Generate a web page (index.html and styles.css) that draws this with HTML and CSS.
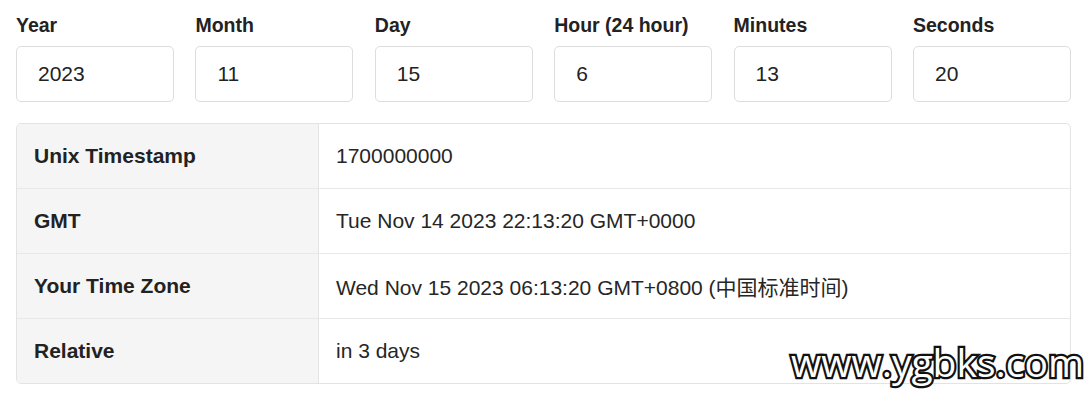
FILE: index.html
```html
<!DOCTYPE html>
<html lang="en">
<head>
  <meta charset="UTF-8" />
  <meta name="viewport" content="width=device-width, initial-scale=1.0" />
  <title>Unix Timestamp Converter</title>
  <link rel="stylesheet" href="styles.css">
</head>
<body>
  <div class="container">
    <div class="fields">
      <div class="field">
        <label for="year">Year</label>
        <input type="text" id="year" value="2023" />
      </div>
      <div class="field">
        <label for="month">Month</label>
        <input type="text" id="month" value="11" />
      </div>
      <div class="field">
        <label for="day">Day</label>
        <input type="text" id="day" value="15" />
      </div>
      <div class="field">
        <label for="hour">Hour (24 hour)</label>
        <input type="text" id="hour" value="6" />
      </div>
      <div class="field">
        <label for="minutes">Minutes</label>
        <input type="text" id="minutes" value="13" />
      </div>
      <div class="field">
        <label for="seconds">Seconds</label>
        <input type="text" id="seconds" value="20" />
      </div>
    </div>

    <table class="results">
      <tr>
        <th>Unix Timestamp</th>
        <td>1700000000</td>
      </tr>
      <tr>
        <th>GMT</th>
        <td>Tue Nov 14 2023 22:13:20 GMT+0000</td>
      </tr>
      <tr>
        <th>Your Time Zone</th>
        <td>Wed Nov 15 2023 06:13:20 GMT+0800 (中国标准时间)</td>
      </tr>
      <tr>
        <th>Relative</th>
        <td>in 3 days</td>
      </tr>
    </table>
  </div>

  <div class="watermark">www.ygbks.com</div>
</body>
</html>
```

FILE: styles.css
```css
body {
  margin: 0;
  padding: 14px 19px 0 16px;
  font-family: "Liberation Sans", Arial, "Noto Sans CJK SC", sans-serif;
  color: #222;
  background: #fff;
}
.container {
  width: 1055px;
}
.fields {
  display: grid;
  grid-template-columns: repeat(6, 1fr);
  column-gap: 21.4px;
}
.field label {
  display: block;
  font-size: 19.5px;
  line-height: 23px;
  font-weight: bold;
  color: #222;
  margin-bottom: 9px;
}
.field input {
  display: block;
  width: 100%;
  box-sizing: border-box;
  height: 56px;
  padding: 0 21px;
  border: 1px solid #ddd;
  border-radius: 5px;
  font-family: inherit;
  font-size: 21px;
  color: #222;
  background: #fff;
}
.results {
  width: 100%;
  margin-top: 21px;
  border-collapse: separate;
  border-spacing: 0;
  border: 1px solid #e3e3e3;
  border-radius: 5px;
  overflow: hidden;
  font-size: 21px;
}
.results th,
.results td {
  height: 64px;
  padding: 0 17px;
  text-align: left;
  border-top: 1px solid #e8e8e8;
}
.results tr:first-child th,
.results tr:first-child td {
  border-top: none;
  height: 64px;
}
.results th {
  width: 267px;
  background: #f5f5f5;
  font-weight: bold;
  border-right: 1px solid #e3e3e3;
}
.results td {
  color: #262626;
}
.watermark {
  position: absolute;
  left: 791px;
  top: 338px;
  font-family: "Open Sans", "Noto Sans", sans-serif;
  font-size: 39px;
  line-height: 48px;
  color: #fff;
  -webkit-text-stroke: 4.5px #111;
  paint-order: stroke fill;
  letter-spacing: 0;
}
```
